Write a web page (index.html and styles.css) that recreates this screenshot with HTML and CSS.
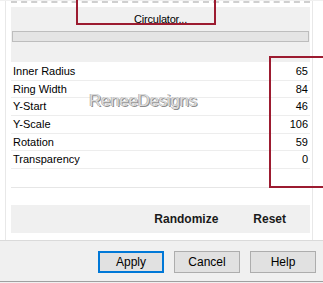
FILE: index.html
```html
<!DOCTYPE html>
<html lang="en">
<head>
  <meta charset="UTF-8" />
  <title>Circulator</title>
  <link rel="stylesheet" href="styles.css">
</head>
<body>
  <div class="sheet">
    <div class="group">
      <div class="dash"></div>
      <div class="panel">
        <div class="preset">Circulator...</div>
        <div class="bar"></div>
      </div>
      <div class="list">
        <div class="row"><span>Inner Radius</span><span>65</span></div>
        <div class="row"><span>Ring Width</span><span>84</span></div>
        <div class="row"><span>Y-Start</span><span>46</span></div>
        <div class="row"><span>Y-Scale</span><span>106</span></div>
        <div class="row"><span>Rotation</span><span>59</span></div>
        <div class="row"><span>Transparency</span><span>0</span></div>
      </div>
      <div class="actions">
        <span>Randomize</span>
        <span>Reset</span>
      </div>
    </div>
  </div>
  <div class="buttons">
    <button class="btn default">Apply</button>
    <button class="btn">Cancel</button>
    <button class="btn">Help</button>
  </div>

  <div class="watermark">ReneeDesigns</div>
  <div class="mark mark-top"></div>
  <div class="mark mark-values"></div>
</body>
</html>
```

FILE: styles.css
```css
body { margin: 0; background: #f0f0f0; font-family: "Liberation Sans", Arial, sans-serif; font-size: 11px; color: #000; position: relative; height: 283px; overflow: hidden; }
.sheet { background: #fff; height: 239px; border-bottom: 1px solid #dadada; padding-left: 5px; }
.group { height: 239px; width: 308px; border-left: 1px solid #e8e8e8; border-right: 1px solid #e8e8e8; padding: 0 2px 0 5px; box-sizing: border-box; }
.dash { margin-top: 1px; border-top: 2px dashed #cfcfcf; height: 4px; }
.panel { background: #f0f0f0; height: 55px; box-sizing: border-box; padding: 6px 1px 0 1px; }
.preset { text-align: center; line-height: 13px; height: 13px; letter-spacing: -0.2px; }
.bar { margin-top: 5px; height: 11px; box-sizing: border-box; background: #e4e4e4; border: 1px solid #bdbdbd; }
.list { height: 126px; box-sizing: border-box; padding-top: 1px; border-bottom: 1px solid #e6e6e6; }
.row { display: flex; justify-content: space-between; height: 17.7px; line-height: 17px; box-sizing: border-box; border-bottom: 1px solid #ededed; padding: 0 2px 0 2px; }
.actions { margin-top: 17px; height: 28px; background: #f0f0f0; display: flex; justify-content: flex-end; align-items: center; gap: 35px; padding-right: 24px; font-size: 12px; font-weight: bold; color: #1a1a1a; }
.buttons { display: flex; justify-content: flex-end; gap: 10px; padding: 10px 7px 0 0; height: 41px; box-sizing: border-box; border-bottom: 1px solid #a0a0a0; }
.btn { width: 66px; height: 22px; background: #e1e1e1; border: 1px solid #adadad; font-family: "Liberation Sans", Arial, sans-serif; font-size: 12px; color: #000; padding: 0; margin: 0; }
.btn.default { border: 2px solid #0078d7; }
.watermark { position: absolute; left: 89px; top: 91px; font-size: 17px; color: #dcdcdc; text-shadow: 1px 1px 0 #8c8c8c, -0.5px -0.5px 0 #a0a0a0; letter-spacing: -0.3px; }
.mark { position: absolute; border: 2px solid #9c1b30; box-sizing: border-box; }
.mark-top { left: 76px; top: -10px; width: 140px; height: 35px; }
.mark-values { left: 269px; top: 56px; width: 70px; height: 132px; }
```
